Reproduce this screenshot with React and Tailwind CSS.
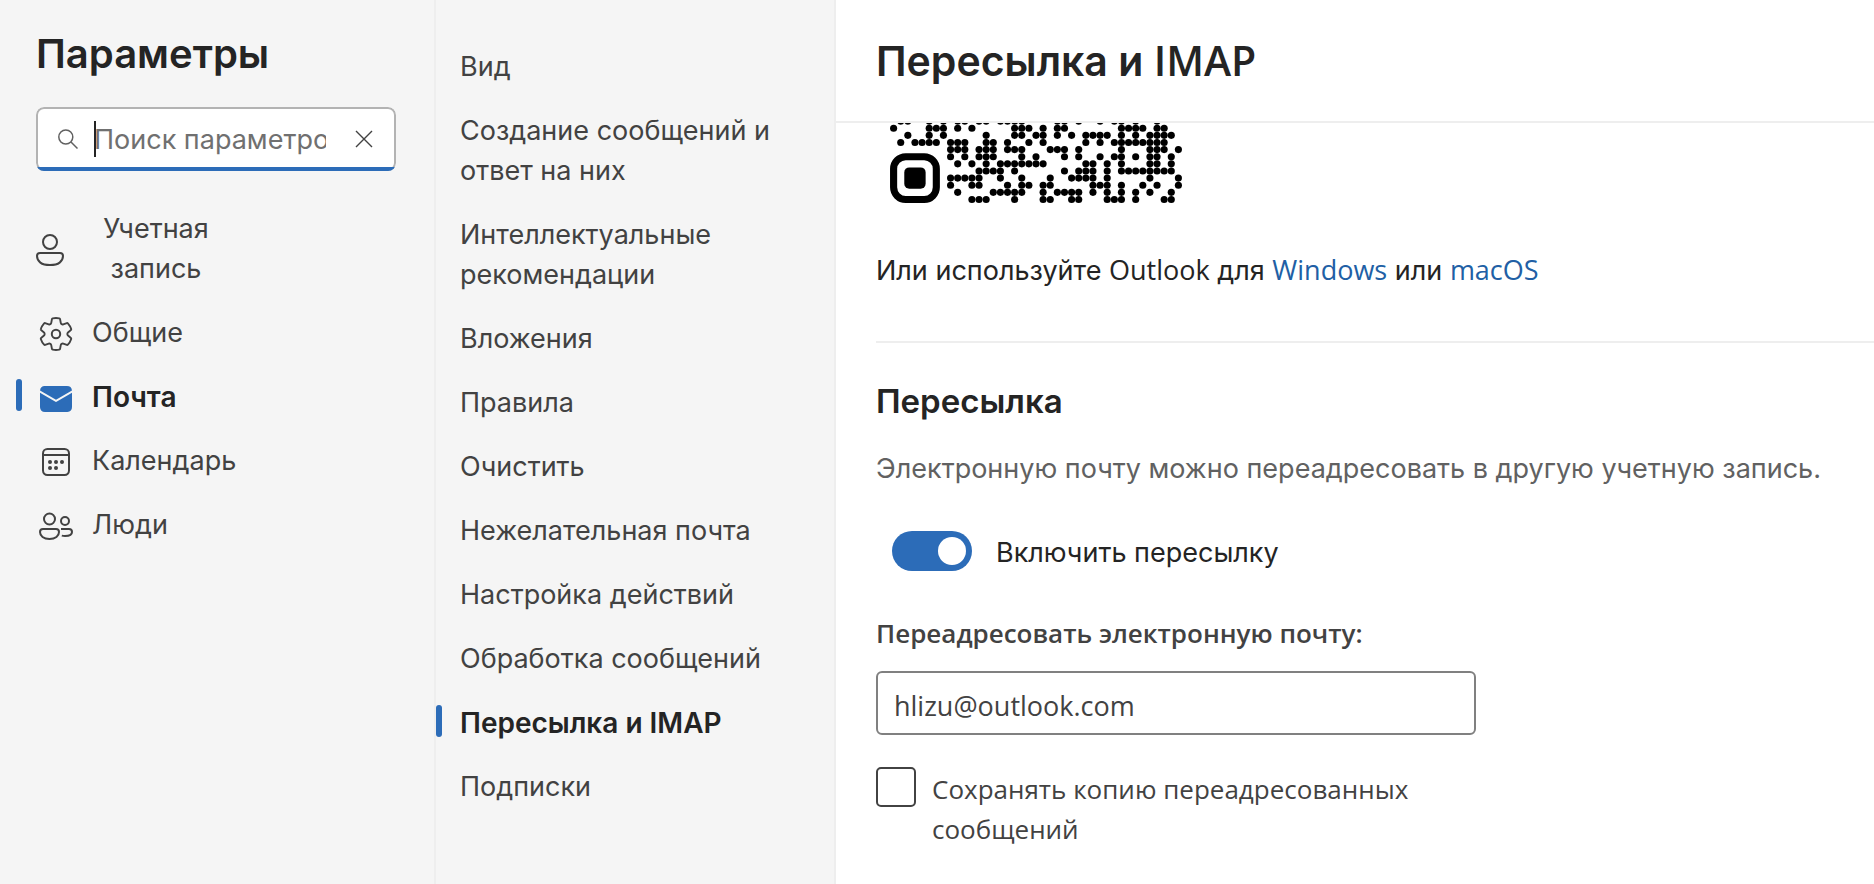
import { useState } from 'react'

const QR_ROWS = [
  [1, 2, 5, 7, 9, 10, 12, 13, 15, 16, 17, 18, 23, 24, 26, 29, 31, 32, 34, 37],
  [0, 5, 6, 7, 9, 11, 17, 18, 19, 21, 23, 24, 32, 33, 34, 35, 37, 38],
  [2, 5, 7, 13, 17, 18, 20, 21, 23, 25, 27, 28, 29, 30, 32, 34, 36, 37, 38, 39],
  [1, 3, 4, 5, 6, 8, 9, 10, 13, 14, 16, 19, 21, 27, 29, 31, 32, 33, 34, 35, 36, 37, 38],
  [8, 9, 10, 12, 13, 14, 16, 17, 18, 22, 23, 24, 26, 32, 36, 37, 38, 40],
  [8, 10, 12, 13, 14, 18, 20, 24, 26, 29, 31, 32, 34, 36, 37, 39],
  [9, 11, 13, 15, 16, 17, 18, 19, 20, 21, 27, 28, 30, 32, 36, 37, 39],
  [12, 13, 14, 15, 17, 24, 26, 27, 28, 30, 32, 33, 34, 35, 36, 37, 38, 39],
  [8, 9, 10, 11, 12, 15, 18, 22, 25, 26, 27, 28, 30, 36, 40],
  [8, 11, 12, 16, 18, 19, 21, 22, 28, 29, 30, 32, 35, 37, 40],
  [9, 14, 15, 16, 17, 18, 21, 23, 24, 25, 26, 28, 30, 32, 34, 36, 39],
  [11, 12, 13, 17, 21, 22, 25, 26, 30, 31, 32, 34, 38, 39],
]

function PersonIcon() {
  return (
    <svg viewBox="3 0 14 20" className="mt-0.5 h-10 w-7 shrink-0" fill="none" stroke="currentColor" aria-hidden="true">
      <circle cx="10" cy="6" r="3.5" />
      <path d="M5 11.5h10a1.5 1.5 0 0 1 1.5 1.5c0 1.15-.56 2.43-1.68 3.3-1.05.8-2.6 1.2-4.82 1.2s-3.77-.4-4.82-1.2C4.06 15.43 3.5 14.15 3.5 13A1.5 1.5 0 0 1 5 11.5Z" />
    </svg>
  )
}

function GearIcon() {
  return (
    <svg viewBox="0 0 20 20" className="mt-0.5 h-10 w-10 shrink-0" fill="none" stroke="currentColor" aria-hidden="true">
      <path
        transform="translate(0.6 0.6) scale(0.94)"
        d="M1.911 7.383a8.491 8.491 0 0 1 1.78-3.08.5.5 0 0 1 .54-.135l1.918.686a1 1 0 0 0 1.32-.762l.366-2.006a.5.5 0 0 1 .388-.4 8.532 8.532 0 0 1 3.554 0 .5.5 0 0 1 .388.4l.366 2.006a1 1 0 0 0 1.32.762l1.919-.686a.5.5 0 0 1 .54.136 8.491 8.491 0 0 1 1.78 3.079.5.5 0 0 1-.153.535l-1.555 1.32a1 1 0 0 0 0 1.524l1.555 1.32a.5.5 0 0 1 .152.535 8.491 8.491 0 0 1-1.78 3.08.5.5 0 0 1-.54.135l-1.918-.686a1 1 0 0 0-1.32.762l-.367 2.007a.5.5 0 0 1-.388.4 8.534 8.534 0 0 1-3.553 0 .5.5 0 0 1-.388-.4l-.366-2.007a1 1 0 0 0-1.32-.762l-1.918.686a.5.5 0 0 1-.54-.136 8.491 8.491 0 0 1-1.78-3.079.5.5 0 0 1 .152-.535l1.555-1.32a1 1 0 0 0 0-1.524l-1.555-1.32a.5.5 0 0 1-.152-.536Z"
      />
      <circle cx="10" cy="10" r="2.1" />
    </svg>
  )
}

function MailIcon() {
  return (
    <svg viewBox="0 0 20 20" className="mt-0.5 h-10 w-10 shrink-0 text-[#2c6cb8]" fill="currentColor" aria-hidden="true">
      <path d="M18 7.373V14.5a2.5 2.5 0 0 1-2.336 2.495L15.5 17h-11a2.5 2.5 0 0 1-2.495-2.336L2 14.5V7.373l7.747 4.558a.5.5 0 0 0 .507 0L18 7.373ZM15.5 4a2.5 2.5 0 0 1 2.485 2.223L10 10.92 2.015 6.223A2.5 2.5 0 0 1 4.35 4.005L4.5 4h11Z" />
    </svg>
  )
}

function CalendarIcon() {
  return (
    <svg viewBox="0 0 20 20" className="mt-0.5 h-10 w-10 shrink-0" fill="none" stroke="currentColor" aria-hidden="true">
      <rect x="3.5" y="3.5" width="13" height="13" rx="2.2" />
      <path d="M3.5 6.5h13" />
      <g fill="currentColor" stroke="none">
        <circle cx="7" cy="10" r="1" />
        <circle cx="10" cy="10" r="1" />
        <circle cx="13" cy="10" r="1" />
        <circle cx="7" cy="13" r="1" />
        <circle cx="10" cy="13" r="1" />
      </g>
    </svg>
  )
}

function PeopleIcon() {
  return (
    <svg viewBox="0 0 20 20" className="mt-0.5 h-10 w-10 shrink-0" fill="none" stroke="currentColor" aria-hidden="true">
      <circle cx="6.75" cy="6.5" r="2.75" />
      <circle cx="14.5" cy="7.5" r="2" />
      <path d="M3.5 11.5H10a1.5 1.5 0 0 1 1.5 1.5c0 2-1.8 3.5-4.75 3.5S2 15 2 13a1.5 1.5 0 0 1 1.5-1.5Z" />
      <path d="M12.5 11.5h4A1.5 1.5 0 0 1 18 13c0 1.2-1.1 2-3.5 2-.6 0-1.1-.06-1.6-.2" />
    </svg>
  )
}

function QrCode() {
  return (
    <svg viewBox="0 0.764 41 11.236" className="ml-3.5 h-20 w-[292px]" role="img" aria-label="QR">
      {QR_ROWS.map((cells, row) =>
        cells.map((col) => <circle key={`${row}-${col}`} cx={col + 0.5} cy={row + 0.5} r="0.5" />),
      )}
      <rect x="0.5" y="5.5" width="6" height="6" rx="1.7" fill="none" stroke="#000" />
      <rect x="2" y="7" width="3" height="3" rx="0.7" />
    </svg>
  )
}

const categories = [
  { label: 'Общие', icon: GearIcon },
  { label: 'Почта', icon: MailIcon },
  { label: 'Календарь', icon: CalendarIcon },
  { label: 'Люди', icon: PeopleIcon },
]

const sections = [
  'Вид',
  'Создание сообщений и ответ на них',
  'Интеллектуальные рекомендации',
  'Вложения',
  'Правила',
  'Очистить',
  'Нежелательная почта',
  'Настройка действий',
  'Обработка сообщений',
  'Пересылка и IMAP',
  'Подписки',
]

function SearchBox() {
  const [query, setQuery] = useState('')

  return (
    <div className="relative overflow-hidden rounded-lg">
      <div className="flex h-16 items-center rounded-lg border-2 border-[#b3b3b3] bg-white pr-5 pl-5">
        <svg viewBox="0 0 20 20" className="h-5 w-5 shrink-0 text-[#616161]" fill="none" stroke="currentColor" strokeWidth="1.5" aria-hidden="true">
          <circle cx="7.8" cy="8" r="7" />
          <path d="m13 13 6.5 6.5" />
        </svg>
        <span className="ml-4 h-9 w-0.5 shrink-0 bg-[#242424]" />
        <input
          type="text"
          aria-label="Поиск параметров"
          placeholder="Поиск параметров"
          value={query}
          onChange={(event) => setQuery(event.target.value)}
          className="mr-7 -ml-0.5 h-10 min-w-0 flex-1 bg-transparent pt-0.5 text-[#424242] outline-none placeholder:text-[#707070]"
        />
        <button type="button" aria-label="Очистить" onClick={() => setQuery('')} className="grid h-5 w-5 shrink-0 place-items-center text-[#424242]">
          <svg viewBox="0 0 18 18" className="h-[18px] w-[18px]" fill="none" stroke="currentColor" strokeWidth="1.4" aria-hidden="true">
            <path d="m1 1 16 16M17 1 1 17" />
          </svg>
        </button>
      </div>
      <span className="absolute inset-x-0 bottom-0 h-1 bg-[#2c6cb8]" />
    </div>
  )
}

function App() {
  const [category, setCategory] = useState('Почта')
  const [section, setSection] = useState('Пересылка и IMAP')
  const [forwarding, setForwarding] = useState(true)
  const [keepCopy, setKeepCopy] = useState(false)
  const [email, setEmail] = useState('hlizu@outlook.com')

  return (
    <div className="flex min-h-screen bg-white font-['Inter',sans-serif] text-[27px] leading-10 text-[#424242]">
      <aside className="w-[436px] shrink-0 border-r-2 border-[#eeeeee] bg-[#f5f5f5] px-9 pt-[30px]">
        <h1 className="mb-[29px] text-[40px] leading-12 font-semibold text-[#242424]">Параметры</h1>
        <div className="mr-0.5">
          <SearchBox />
        </div>
        <nav className="mt-[38px] flex flex-col items-start gap-6">
          <button type="button" onClick={() => setCategory('Учетная запись')} className="flex items-center gap-7">
            <PersonIcon />
            <span className="w-32 text-center">Учетная запись</span>
          </button>
          {categories.map(({ label, icon: Icon }) => (
            <button
              key={label}
              type="button"
              onClick={() => setCategory(label)}
              className={`relative flex h-10 items-center gap-4 ${category === label ? 'text-[28px] font-semibold text-[#242424]' : ''}`}
            >
              {category === label && <span className="absolute top-0.5 -left-5 h-8 w-1.5 rounded-full bg-[#2c6cb8]" />}
              <Icon />
              {label}
            </button>
          ))}
        </nav>
      </aside>

      <nav className="flex w-[400px] shrink-0 flex-col items-start gap-6 border-r-2 border-[#eeeeee] bg-[#f5f5f5] pt-[47px] pr-8 pl-6">
        {sections.map((label) => (
          <button
            key={label}
            type="button"
            onClick={() => setSection(label)}
            className={`relative text-left ${section === label ? 'text-[28px] font-semibold text-[#242424]' : ''}`}
          >
            {section === label && <span className="absolute top-0.5 -left-6 h-8 w-1.5 rounded-full bg-[#2c6cb8]" />}
            {label}
          </button>
        ))}
      </nav>

      <main className="min-w-0 flex-1">
        <header className="border-b-2 border-[#eeeeee] px-10 pt-9 pb-9">
          <h2 className="text-[41px] leading-12 font-semibold text-[#242424]">
            Пересылка и <span className="font-['Open_Sans',sans-serif]">IMAP</span>
          </h2>
        </header>
        <div className="pb-8 pl-10">
          <QrCode />
          <p className="mt-[47px] text-[#242424]">
            Или используйте <span className="font-['Open_Sans',sans-serif]">Outlook</span> для{' '}
            <a href="#windows" className="font-['Open_Sans',sans-serif] text-[#215fa5]">Windows</a> или{' '}
            <a href="#macos" className="font-['Open_Sans',sans-serif] text-[#215fa5]">macOS</a>
          </p>
          <hr className="mt-[50px] border-t-2 border-[#eeeeee]" />
          <h3 className="mt-9 text-[33px] leading-11 font-semibold text-[#242424]">Пересылка</h3>
          <p className="mt-[26px] text-[#616161]">Электронную почту можно переадресовать в другую учетную запись.</p>
          <div className="mt-10 flex items-center gap-6 pl-4">
            <input
              id="forwarding"
              type="checkbox"
              role="switch"
              checked={forwarding}
              onChange={(event) => setForwarding(event.target.checked)}
              className="flex h-10 w-20 appearance-none items-center rounded-full bg-[#8a8a8a] px-1.5 before:h-7 before:w-7 before:rounded-full before:bg-white checked:justify-end checked:bg-[#2c6cb8]"
            />
            <label htmlFor="forwarding" className="pt-1 text-[#242424]">Включить пересылку</label>
          </div>
          <div className="max-w-[600px] font-['Open_Sans',sans-serif]">
            <label htmlFor="email" className="mt-10 block text-[26px] leading-10 font-semibold">Переадресовать электронную почту:</label>
            <input
              id="email"
              type="email"
              value={email}
              onChange={(event) => setEmail(event.target.value)}
              className="mt-[18px] block h-16 w-full rounded-md border-2 border-[#808080] bg-white px-4 pt-1 outline-none"
            />
            <div className="mt-8 flex items-start gap-4">
              <input
                id="keep-copy"
                type="checkbox"
                checked={keepCopy}
                onChange={(event) => setKeepCopy(event.target.checked)}
                className="h-10 w-10 shrink-0 appearance-none rounded-[5px] border-2 border-[#424242] bg-white checked:bg-[#2c6cb8]"
              />
              <label htmlFor="keep-copy" className="pt-0.5 text-[26px] leading-10">Сохранять копию переадресованных сообщений</label>
            </div>
          </div>
        </div>
      </main>
    </div>
  )
}

export default App
